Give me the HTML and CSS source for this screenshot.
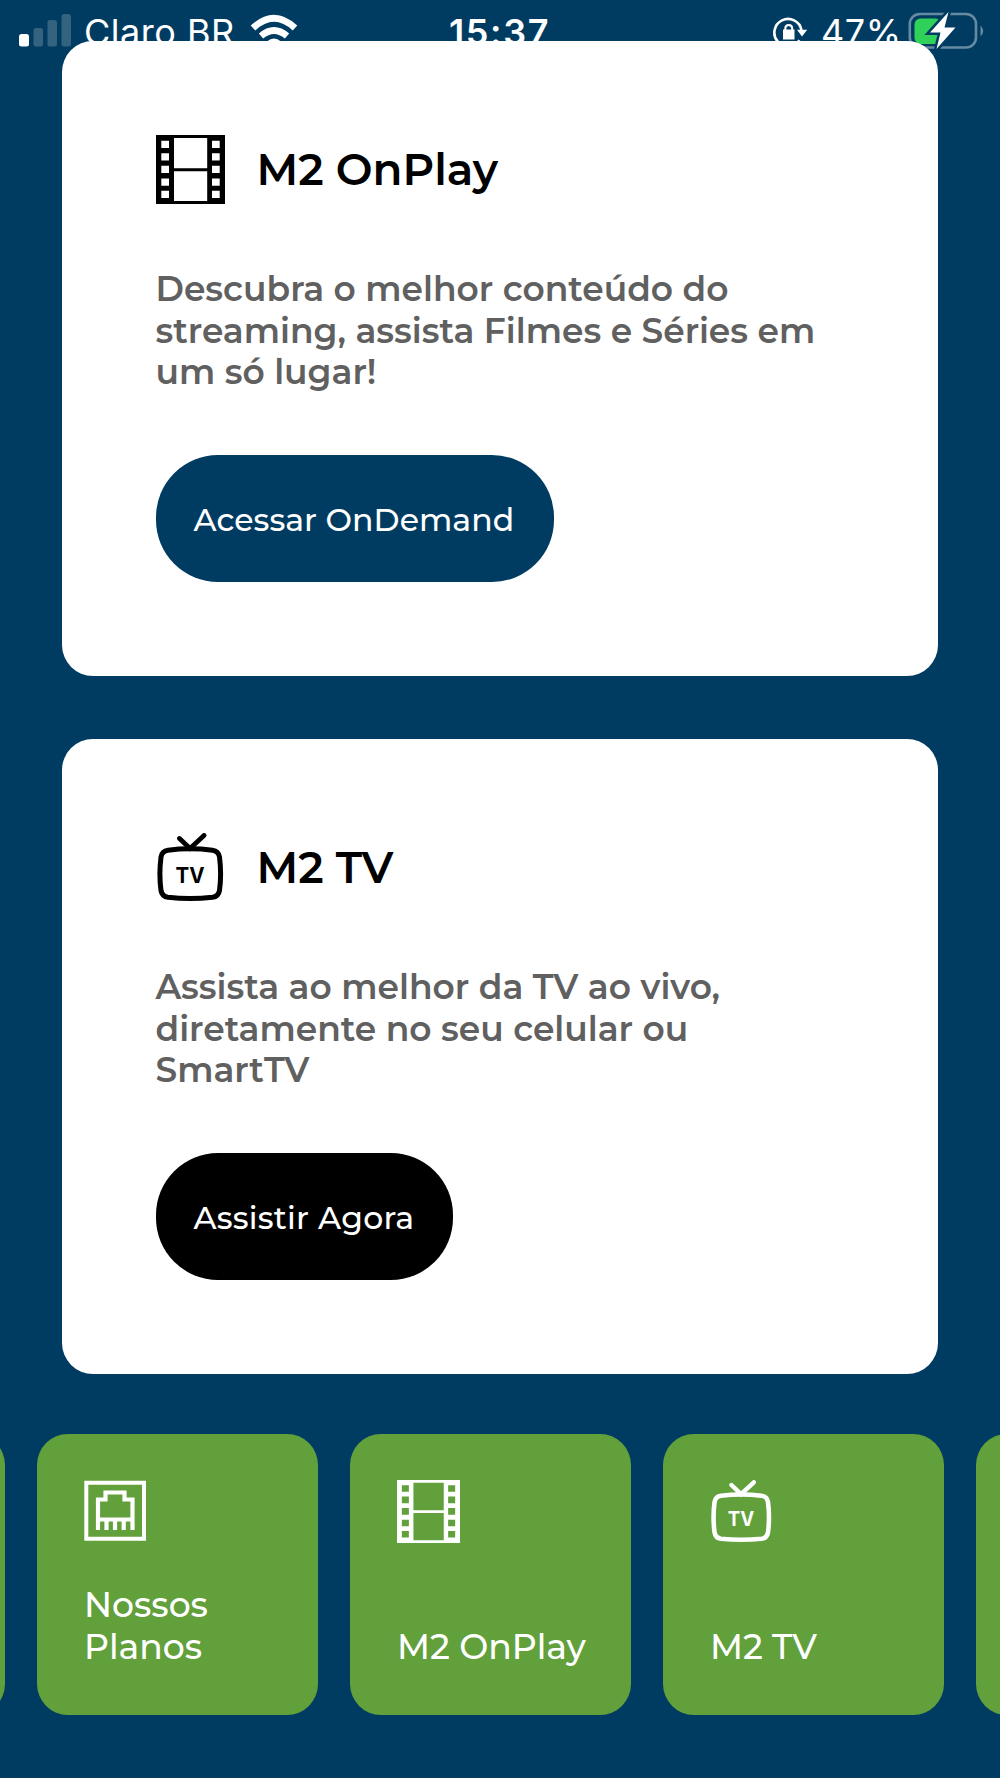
FILE: index.html
```html
<!DOCTYPE html>
<html lang="pt-BR">
<head>
  <meta charset="UTF-8">
  <title>M2</title>
  <link rel="stylesheet" href="styles.css">
</head>
<body>
  <!-- shared icons -->
  <svg class="sprite" width="0" height="0">
    <symbol id="icon-film" viewBox="0 0 69 69">
      <path fill="currentColor" fill-rule="evenodd" d="M0 0H69V69H0ZM18 3V33.200H51.200V3ZM18 36.200V66H51.200V36.200ZM5.300 5.700V13H13V5.700ZM5.300 18.200V25.500H13V18.200ZM5.300 30.800V38.100H13V30.800ZM5.300 43.400V50.700H13V43.400ZM5.300 55.800V63.100H13V55.800ZM56 5.700V13H63.700V5.700ZM56 18.200V25.500H63.700V18.200ZM56 30.800V38.100H63.700V30.800ZM56 43.400V50.700H63.700V43.400ZM56 55.800V63.100H63.700V55.800Z"/>
    </symbol>
    <symbol id="icon-tv" viewBox="0 0 69 69">
      <path fill="none" stroke="currentColor" stroke-width="4.800" stroke-linecap="round" d="M23.500 5.500L34 15.500L48 2.500"/>
      <path fill="none" stroke="currentColor" stroke-width="5" d="M12 17.200Q34 14.500 56.500 17.200Q62.500 18 63.500 24Q65.700 41 63.500 57.500Q62.500 63.500 56.500 64.300Q34 66.700 12 64.300Q6 63.500 5 57.500Q2.800 41 5 24Q6 18 12 17.200Z"/>
      <text x="34" y="50" text-anchor="middle" class="tv-label" textLength="29" lengthAdjust="spacingAndGlyphs">TV</text>
    </symbol>
    <symbol id="icon-port" viewBox="0 0 63 63">
      <path fill="none" stroke="currentColor" stroke-width="4" d="M2.300 2.700H60V58.700H2.300Z"/>
      <path fill="none" stroke="currentColor" stroke-width="4.200" d="M14 50V19.500H21.500V12.500H40.500V19.500H48.500V50M14 39.500H48.500M22.500 39.500V50M31 39.500V50M39.700 39.500V50"/>
    </symbol>
  </svg>

  <header class="status">
    <svg class="signal" width="53" height="34" viewBox="0 0 53 34">
      <rect class="on" x="0" y="21" width="10" height="12.500" rx="2.500"/>
      <rect x="14.500" y="15" width="9.500" height="18.500" rx="2.500"/>
      <rect x="28.500" y="7" width="9.500" height="26.500" rx="2.500"/>
      <rect x="42.500" y="1" width="9.500" height="32.500" rx="2.500"/>
    </svg>
    <span class="carrier">Claro BR</span>
    <svg class="wifi" width="48" height="34" viewBox="0 0 48 34">
      <path class="arc" d="M3 15Q24-4.500 45 15"/>
      <path class="arc" d="M11 23Q24 12 37 23"/>
      <path class="arc-dot" d="M24 34L17 28.500Q24 22.500 31 28.500Z"/>
    </svg>
    <span class="clock">15:37</span>
    <svg class="lock" width="35" height="34" viewBox="0 0 35 34">
      <path class="ring" d="M28.500 14A13.700 13.700 0 1 0 26.500 24.200"/>
      <path fill="#fff" d="M24 13.800H34.200L29 20.500ZM10 13.500H21.500V23.500H10Z"/>
      <path class="shackle" d="M12.300 14V12.500Q12.300 9 15.700 9T19.200 12.500V14"/>
    </svg>
    <span class="percent">47%</span>
    <svg class="battery" width="80" height="40" viewBox="0 0 80 40">
      <rect class="shell" x="2.800" y="4" width="66.200" height="33.500" rx="10"/>
      <path class="nub" d="M73.500 15.500Q79 21 73.500 26.500Z"/>
      <rect class="level" x="7.500" y="8.500" width="27" height="25.500" rx="6"/>
      <path class="bolt" d="M41.500 2L23 22.500H33.500L29.500 39L48.500 17.500H37.500Z"/>
    </svg>
  </header>

  <main class="cards">
    <section class="card">
      <h2 class="card-title">
        <svg class="card-icon"><use href="#icon-film"/></svg>
        <span>M2 OnPlay</span>
      </h2>
      <p class="card-text">Descubra o melhor conteúdo do<br>streaming, assista Filmes e Séries em<br>um só lugar!</p>
      <button class="btn btn-blue">Acessar OnDemand</button>
    </section>

    <section class="card">
      <h2 class="card-title">
        <svg class="card-icon"><use href="#icon-tv"/></svg>
        <span>M2 TV</span>
      </h2>
      <p class="card-text">Assista ao melhor da TV ao vivo,<br>diretamente no seu celular ou<br>SmartTV</p>
      <button class="btn btn-black">Assistir Agora</button>
    </section>
  </main>

  <nav class="tiles">
    <a class="tile"></a>
    <a class="tile">
      <svg class="tile-icon"><use href="#icon-port"/></svg>
      <span class="tile-name">Nossos<br>Planos</span>
    </a>
    <a class="tile">
      <svg class="tile-icon"><use href="#icon-film"/></svg>
      <span class="tile-name">M2 OnPlay</span>
    </a>
    <a class="tile">
      <svg class="tile-icon"><use href="#icon-tv"/></svg>
      <span class="tile-name">M2 TV</span>
    </a>
    <a class="tile"></a>
  </nav>
</body>
</html>
```
FILE: styles.css
```css
* {
  box-sizing: border-box;
}
body {
  margin: 0;
  width: 1000px;
  height: 1778px;
  overflow: hidden;
  background: #003c62;
  color: #000;
  font-family: Montserrat, Inter, sans-serif;
}
.sprite {
  display: block;
}
.status {
  display: flex;
  align-items: flex-start;
  height: 41px;
  padding: 13px 16px 0 19px;
  color: #fff;
  font-family: Inter, sans-serif;
  font-size: 36px;
  line-height: 38px;
  white-space: nowrap;
}
.status svg {
  flex: none;
}
.signal {
  fill: #33637f;
}
.signal .on {
  fill: #fff;
}
.carrier {
  width: 150px;
  margin-left: 12px;
  letter-spacing: 0.5px;
}
.wifi {
  margin-left: 16px;
}
.arc {
  fill: none;
  stroke: #fff;
  stroke-width: 6.7;
}
.arc-dot {
  fill: #fff;
}
.clock {
  width: 100px;
  margin-left: 151px;
  font-weight: 600;
  letter-spacing: 1.6px;
}
.lock {
  margin: 3px 0 0 224px;
}
.ring {
  fill: none;
  stroke: #fff;
  stroke-width: 2.6;
}
.shackle {
  fill: none;
  stroke: #fff;
  stroke-width: 2;
}
.percent {
  width: 79px;
  margin-left: 13px;
  letter-spacing: 0.6px;
}
.battery {
  margin: -3px 0 0 7px;
}
.shell {
  fill: none;
  stroke: #668aa1;
  stroke-width: 2.6;
}
.nub {
  fill: #668aa1;
}
.level {
  fill: #30d158;
}
.bolt {
  fill: #fff;
  stroke: #003c62;
  stroke-width: 5;
  paint-order: stroke;
}

/* cards slide over the status bar */
.cards {
  position: relative;
  z-index: 1;
  display: flex;
  flex-direction: column;
  gap: 63px;
  padding: 0 62px;
}
.card {
  height: 635px;
  padding: 94px 93.500px 93px;
  border-radius: 31px;
  background: #fff;
}
.card-title {
  display: flex;
  align-items: center;
  gap: 32px;
  height: 69px;
  margin: 0;
  font-size: 43.7px;
  font-weight: 600;
  white-space: nowrap;
}
.card-icon {
  width: 69px;
  height: 69px;
}
.card-text {
  margin: 65px 0 60.900px;
  color: #606060;
  font-size: 34.45px;
  font-weight: 600;
  line-height: 41.700px;
  white-space: nowrap;
}
.btn {
  display: block;
  height: 127px;
  padding: 2px 0 0 38px;
  border: 0;
  border-radius: 62px;
  color: #fff;
  font: 500 31.5px Montserrat, Inter, sans-serif;
  letter-spacing: 0.05px;
  text-align: left;
  white-space: nowrap;
}
.btn-blue {
  width: 398px;
  background: #003c62;
}
.btn-black {
  width: 297.500px;
  background: #000;
  letter-spacing: 0.25px;
}
.tv-label {
  font: 700 22px Inter, sans-serif;
  fill: currentColor;
}

.tiles {
  display: flex;
  gap: 31.600px;
  margin: 59.500px 0 0 -276px;
}
.tile {
  display: flex;
  flex: none;
  flex-direction: column;
  justify-content: space-between;
  width: 281.400px;
  height: 281.500px;
  padding: 46.5px 47px 47px;
  border-radius: 31px;
  background: #62a03c;
  color: #fff;
}
.tile-icon {
  width: 63px;
  height: 63px;
}
.tile-name {
  font-size: 34.6px;
  font-weight: 500;
  line-height: 42px;
  white-space: nowrap;
}
```
